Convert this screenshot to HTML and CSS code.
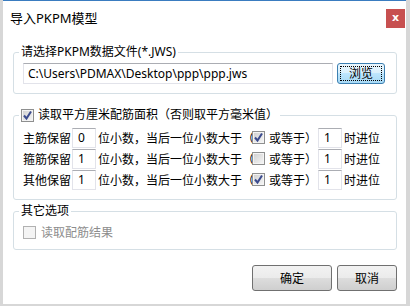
FILE: index.html
```html
<!DOCTYPE html>
<html>

<head>
  <meta charset="utf8">
  <title>导入PKPM模型</title>
  <link rel="stylesheet" href="styles.css">
</head>

<body>
  <div class="dialog">
    <div class="titlebar">
      <span class="title">导入PKPM模型</span>
      <span class="close">x</span>
    </div>

    <!-- archivo de datos -->
    <fieldset class="group group-file">
      <legend>请选择PKPM数据文件(*.JWS)</legend>
      <div class="file-row">
        <input class="path" type="text" value="C:\Users\PDMAX\Desktop\ppp\ppp.jws">
        <button class="browse"><span class="focus">浏览</span></button>
      </div>
    </fieldset>

    <!-- opciones de redondeo -->
    <fieldset class="group group-area">
      <legend class="check-legend">
        <span class="box checked"><svg viewBox="0 0 11 11"><path d="M2 5.5 L4.5 8.5 L9 1.5"/></svg></span>
        <span>读取平方厘米配筋面积（否则取平方毫米值）</span>
      </legend>
      <div class="row">
        <span class="name">主筋保留</span>
        <input class="num" type="text" value="0">
        <span class="txt">位小数，当后一位小数大于（</span>
        <span class="box checked"><svg viewBox="0 0 11 11"><path d="M2 5.5 L4.5 8.5 L9 1.5"/></svg></span>
        <span class="txt or">或等于）</span>
        <input class="num" type="text" value="1">
        <span class="txt">时进位</span>
      </div>
      <div class="row">
        <span class="name">箍筋保留</span>
        <input class="num" type="text" value="1">
        <span class="txt">位小数，当后一位小数大于（</span>
        <span class="box"></span>
        <span class="txt or">或等于）</span>
        <input class="num" type="text" value="1">
        <span class="txt">时进位</span>
      </div>
      <div class="row">
        <span class="name">其他保留</span>
        <input class="num" type="text" value="1">
        <span class="txt">位小数，当后一位小数大于（</span>
        <span class="box checked"><svg viewBox="0 0 11 11"><path d="M2 5.5 L4.5 8.5 L9 1.5"/></svg></span>
        <span class="txt or">或等于）</span>
        <input class="num" type="text" value="1">
        <span class="txt">时进位</span>
      </div>
    </fieldset>

    <!-- otras opciones -->
    <fieldset class="group group-other">
      <legend>其它选项</legend>
      <div class="row disabled">
        <span class="box"></span>
        <span class="txt">读取配筋结果</span>
      </div>
    </fieldset>

    <div class="buttons">
      <button class="btn ok">确定</button>
      <button class="btn cancel">取消</button>
    </div>
  </div>
</body>

</html>
```

FILE: styles.css
```css
/* Estilos generales */
body {
  margin: 0;
  background: #d7d7d7;
  font-family: "Noto Sans", "Noto Sans CJK SC", sans-serif;
  font-size: 12px;
  color: #000;
}

/* Ventana del dialogo */
.dialog {
  margin-left: 3px;
  width: 403px;
  height: 303px;
  background: #fff;
  border-top: 1px solid #3a7cc0;
  overflow: hidden;
}

/* Barra de titulo */
.titlebar {
  display: flex;
  align-items: flex-start;
  height: 35px;
  padding-left: 7px;
}

.title {
  margin-top: 9px;
  font-size: 13px;
  line-height: 16px;
}

.close {
  margin-left: auto;
  margin-top: 8px;
  margin-right: 1px;
  width: 19px;
  height: 19px;
  background: #c75050;
  color: #fff;
  font-family: "DejaVu Sans", sans-serif;
  font-weight: bold;
  font-size: 11px;
  line-height: 17px;
  text-align: center;
}

/* Grupos */
.group {
  margin: 0 9px 0 10px;
  border: 1px solid #d5dfe5;
  border-radius: 3px;
  padding: 3px 10px 9px 9px;
  min-width: 0;
}

.group legend {
  padding: 0 2px;
  margin-left: -4px;
  line-height: 16px;
}

.group-file {
  margin-top: 8px;
}

.group-area {
  margin-top: 13px;
  padding-top: 4px;
}

.group-other {
  margin-top: 3px;
  padding-top: 3px;
}

/* Fila del archivo */
.file-row {
  display: flex;
  align-items: center;
}

.path {
  width: 310px;
  height: 21px;
  box-sizing: border-box;
  border: 1px solid #e2e3ea;
  border-top-color: #abadb3;
  padding: 0 0 0 4px;
  font: inherit;
  outline: none;
}

.browse {
  margin-left: 4px;
  width: 48px;
  height: 21px;
  padding: 2px;
  border: 1px solid #3c7fb1;
  border-radius: 3px;
  background: linear-gradient(#eaf6fd, #d9f0fc 50%, #bee6fd 50%, #a7d9f5);
  font: inherit;
  display: flex;
}

.browse .focus {
  flex: 1;
  border: 1px dotted #000;
  line-height: 13px;
  text-align: center;
}

/* Casillas */
.box {
  display: inline-block;
  width: 13px;
  height: 13px;
  box-sizing: border-box;
  border: 1px solid #8e8f8f;
  background: linear-gradient(135deg, #cfcfcf, #f7f7f7);
  box-shadow: inset 0 0 0 1px #f4f4f4;
  flex: none;
}

.box svg {
  display: block;
  width: 11px;
  height: 11px;
}

.box svg path {
  fill: none;
  stroke: #3b4b8e;
  stroke-width: 2;
}

.check-legend {
  display: flex;
  align-items: center;
}

.check-legend .box {
  margin-right: 4px;
}

/* Filas de opciones */
.row {
  display: flex;
  align-items: center;
  height: 21px;
  white-space: nowrap;
}

.num {
  width: 24px;
  height: 20px;
  box-sizing: border-box;
  margin: 0 2px 0 1px;
  border: 1px solid #e2e3ea;
  border-top-color: #abadb3;
  padding: 0 0 0 5px;
  font: inherit;
  outline: none;
}

.row .box {
  margin-left: -2px;
}

.row .or {
  margin-left: 4px;
}

/* Opcion deshabilitada */
.disabled {
  height: 16px;
  margin-top: 2px;
}

.disabled .box {
  margin-left: 0;
  border-color: #b1b1b1;
  background: #f4f4f4;
}

.disabled .txt {
  margin-left: 5px;
  color: #8d8d8d;
}

/* Botones inferiores */
.buttons {
  display: flex;
  justify-content: flex-end;
  gap: 5px;
  margin: 15px 9px 0 0;
}

.btn {
  height: 26px;
  border: 1px solid #707070;
  border-radius: 3px;
  background: linear-gradient(#f2f2f2, #ebebeb 50%, #dddddd 50%, #cfcfcf);
  font: inherit;
}

.ok {
  width: 80px;
}

.cancel {
  width: 60px;
}
```
